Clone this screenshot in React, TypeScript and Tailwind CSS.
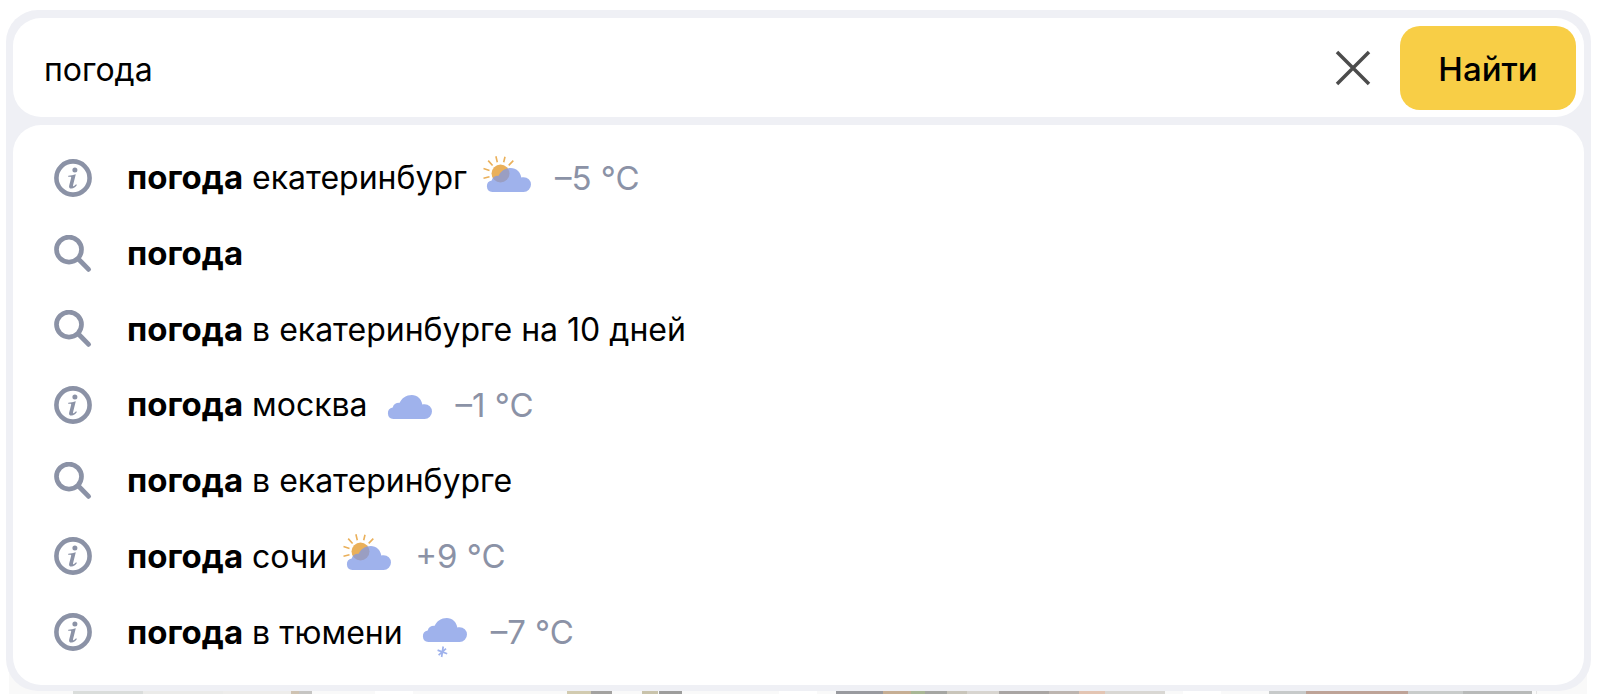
import { useState } from 'react';

type IconKind = 'info' | 'search';
type WeatherKind = 'sun-cloud' | 'cloud' | 'snow';

interface Suggestion {
  icon: IconKind;
  rest?: string;
  weather?: WeatherKind;
  temp?: string;
}

const QUERY = 'погода';

const suggestions: Suggestion[] = [
  { icon: 'info', rest: 'екатеринбург', weather: 'sun-cloud', temp: '–5 °C' },
  { icon: 'search' },
  { icon: 'search', rest: 'в екатеринбурге на 10 дней' },
  { icon: 'info', rest: 'москва', weather: 'cloud', temp: '–1 °C' },
  { icon: 'search', rest: 'в екатеринбурге' },
  { icon: 'info', rest: 'сочи', weather: 'sun-cloud', temp: '+9 °C' },
  { icon: 'info', rest: 'в тюмени', weather: 'snow', temp: '–7 °C' },
];

// [x, width, colour] bands of each thumbnail, on a 366 wide card
const thumbs: [number, number, string][][] = [
  [[64, 70, '#dadddb'], [134, 80, '#ebebe9'], [214, 68, '#eeedeb'], [282, 8, '#cfc3b2'], [290, 13, '#c6c5c3']],
  [[154, 24, '#d2cbb0'], [178, 21, '#a3a2a0'], [229, 16, '#c9c3ab'], [246, 23, '#9d9d9c']],
  [
    [19, 47, '#999a9f'], [66, 28, '#c6ae93'], [94, 14, '#a9b795'], [108, 22, '#a5a6a2'], [130, 20, '#c9c5ba'],
    [150, 32, '#d8d5d0'], [182, 50, '#a9a5a3'], [232, 30, '#bdb5b0'], [262, 26, '#e3c5b3'], [288, 60, '#d9d7d3'],
  ],
  [[48, 37, '#c7caca'], [85, 102, '#bea397'], [187, 55, '#c9cccb'], [242, 69, '#b8bab9'], [315, 1, '#e4e4e4']],
];

function InfoIcon() {
  return (
    <svg viewBox="0 0 38 38" className="h-[38px] w-[38px]" aria-hidden="true">
      <circle cx="19" cy="19" r="16.6" fill="none" stroke="#8b92a6" strokeWidth="4.6" />
      <circle cx="20.9" cy="10.9" r="2.5" fill="#8b92a6" />
      <path
        d="M14.3 16.8c2.6-.2 5-.8 7.5-1.6l-2.7 10.9c-.3 1.3.2 1.5 1 .9l2-1.7.8.7c-1.5 2.2-3.3 3.6-5.4 3.6-2.1 0-2.8-1.3-2.3-3.2l1.9-7.3c.3-1.1-.1-1.3-1.1-1.3h-1.9z"
        fill="#8b92a6"
      />
    </svg>
  );
}

function SearchIcon() {
  return (
    <svg viewBox="0 0 38 38" className="h-[38px] w-[38px]" fill="none" stroke="#8b92a6" aria-hidden="true">
      <circle cx="15" cy="14.6" r="12.5" strokeWidth="4.7" />
      <path d="M24.4 24l10.2 10.4" strokeWidth="4.8" strokeLinecap="round" />
    </svg>
  );
}

function Cloud() {
  return (
    <path
      d="M9.3 38a5.8 5.8 0 0 1-.6-11.5c.6-3.1 3.3-4.9 7-4.7C17.5 17.2 22.3 14 27.8 14c5.5 0 9.7 3.9 10.5 9.5.8-.2 1.5-.3 2.3-.3a7.4 7.4 0 0 1 0 14.8z"
      fill="#7f98e6"
      fillOpacity=".75"
    />
  );
}

function WeatherIcon({ kind }: { kind: WeatherKind }) {
  return (
    <svg viewBox="0 0 48 48" className="h-12 w-12 overflow-visible" fill="none" aria-hidden="true">
      {kind === 'sun-cloud' && (
        <>
          <circle cx="17.5" cy="19.5" r="9" fill="#eab05a" />
          <path
            d="M.5 24.2l6-1.5M.5 14.6l6 1.8M5.2 6.6l4.4 4.9M12.9 2.2l1.4 6M22 2.7l-1.3 5.6M30.3 6.6l-4.6 4.8"
            stroke="#eab05a"
            strokeWidth="1.6"
          />
        </>
      )}
      {kind === 'snow' ? (
        <>
          <g transform="translate(0 -4)">
            <Cloud />
          </g>
          <path d="M24.2 38.5l-1.6 10.5M18.6 42.1l9.6 3.600M19.600 47.200l7.400-6.600" stroke="#9fb2ec" strokeWidth="1.7" />
        </>
      ) : (
        <Cloud />
      )}
    </svg>
  );
}

function SuggestionRow({ item }: { item: Suggestion }) {
  return (
    <li className="flex">
      <a href="#" className="flex flex-1 items-center pl-[41px] text-black">
        {item.icon === 'info' ? <InfoIcon /> : <SearchIcon />}
        <span className="ml-[35px] whitespace-nowrap">
          <b className="text-[33px] font-bold">{QUERY}</b> {item.rest}
        </span>
        {item.weather && (
          <>
            <span className="ml-4">
              <WeatherIcon kind={item.weather} />
            </span>
            <span className="ml-6 text-[33px] whitespace-nowrap text-[#8b92a6]">{item.temp}</span>
          </>
        )}
      </a>
    </li>
  );
}

export default function App() {
  const [value, setValue] = useState(QUERY);

  return (
    <div className="overflow-hidden bg-white pt-[10px] font-['Inter','Liberation_Sans',sans-serif] text-[32px] leading-[44px]">
      <div className="relative z-10 mr-[9px] ml-[6px] rounded-[32px] bg-[#eff0f5] px-[7px] pt-2 pb-[6px]">
        <form className="flex h-[99px] items-center rounded-[28px] bg-white p-2" onSubmit={(e) => e.preventDefault()}>
          <input
            type="text"
            aria-label="Запрос"
            value={value}
            onChange={(e) => setValue(e.target.value)}
            className="min-w-0 flex-1 bg-transparent pt-1 pl-[23px] text-black outline-none"
          />
          <button type="button" aria-label="Очистить" onClick={() => setValue('')} className="mr-[29px]">
            <svg viewBox="0 0 36 36" className="h-9 w-9" stroke="#4c4c4c" strokeWidth="3.5" aria-hidden="true">
              <path d="M2 2l32 32M34 2L2 34" />
            </svg>
          </button>
          <button
            type="submit"
            className="h-[84px] w-[176px] rounded-[20px] bg-[#f8ce46] pt-0.5 text-[33px] font-medium text-black"
          >
            Найти
          </button>
        </form>
        <ul className="mt-2 grid min-h-[560px] auto-rows-fr rounded-[28px] bg-white py-[15px]">
          {suggestions.map((item, i) => (
            <SuggestionRow key={i} item={item} />
          ))}
        </ul>
      </div>

      {/* Tops of the result cards under the dropdown */}
      <div className="-mt-8 grid grid-cols-4 gap-[38px] pr-[13px] pl-[9px]">
        {thumbs.map((bands, i) => (
          <div key={i} className="bg-[#f9f9f9] pt-8">
            <svg viewBox="0 0 366 3" preserveAspectRatio="none" className="block h-[3px] w-full" aria-hidden="true">
              {bands.map(([x, width, fill]) => (
                <rect key={x} x={x} width={width} height="3" fill={fill} />
              ))}
            </svg>
          </div>
        ))}
      </div>
    </div>
  );
}
